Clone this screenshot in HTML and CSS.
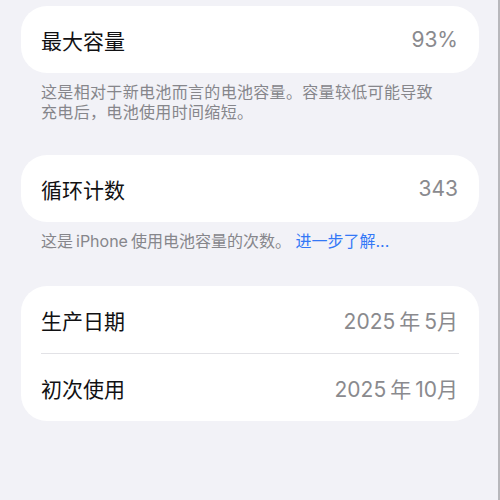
FILE: index.html
```html
<!DOCTYPE html>
<html lang="zh-CN">
<head>
<meta charset="utf-8">
<link rel="stylesheet" href="styles.css">
</head>
<body>
<main class="page">
  <section class="group">
    <div class="card">
      <div class="row"><span class="label">最大容量</span><span class="value">93%</span></div>
    </div>
    <p class="note note-wide">这是相对于新电池而言的电池容量。容量较低可能导致充电后，电池使用时间缩短。</p>
  </section>
  <section class="group">
    <div class="card">
      <div class="row"><span class="label">循环计数</span><span class="value">343</span></div>
    </div>
    <p class="note">这是<span class="gap"></span>iPhone<span class="gap"></span>使用电池容量的次数。 <a class="link" href="#">进一步了解...</a></p>
  </section>
  <section class="group group-last">
    <div class="card">
      <div class="row"><span class="label">生产日期</span><span class="value">2025<span class="vgap"></span>年<span class="vgap"></span>5月</span></div>
      <div class="divider"></div>
      <div class="row"><span class="label">初次使用</span><span class="value">2025<span class="vgap"></span>年<span class="vgap"></span>10月</span></div>
    </div>
  </section>
</main>
</body>
</html>
```

FILE: styles.css
```css
html, body {
  margin: 0;
  padding: 0;
  height: 100%;
}
body {
  background: #f2f2f7;
  font-family: Inter, "Noto Sans CJK SC", sans-serif;
  border-right: 2px solid #b8b8bc;
  box-sizing: border-box;
}
.page {
  padding: 6px 19px 0 21px;
  display: flex;
  flex-direction: column;
  gap: 33px;
}
.group {
  display: flex;
  flex-direction: column;
}
.group-last {
  margin-top: 2px;
}
.card {
  background: #ffffff;
  border-radius: 26px;
  display: flex;
  flex-direction: column;
}
.row {
  height: 67px;
  padding: 0 21px 0 20px;
  display: flex;
  align-items: center;
  justify-content: space-between;
  font-size: 21px;
}
.label {
  color: #111113;
}
.value {
  color: #8a8a8e;
}
.vgap {
  display: inline-block;
  width: 4px;
}
.divider {
  height: 1px;
  background: #e2e2e6;
  margin: 0 20px;
}
.note {
  margin: 9px 0 0 0;
  padding: 0 40px 0 20px;
  font-size: 16px;
  line-height: 20px;
  color: #86868b;
}
.note-wide {
  letter-spacing: 0.33px;
}
.gap {
  display: inline-block;
  width: 3px;
}
.link {
  color: #3478f6;
  text-decoration: none;
}
```
